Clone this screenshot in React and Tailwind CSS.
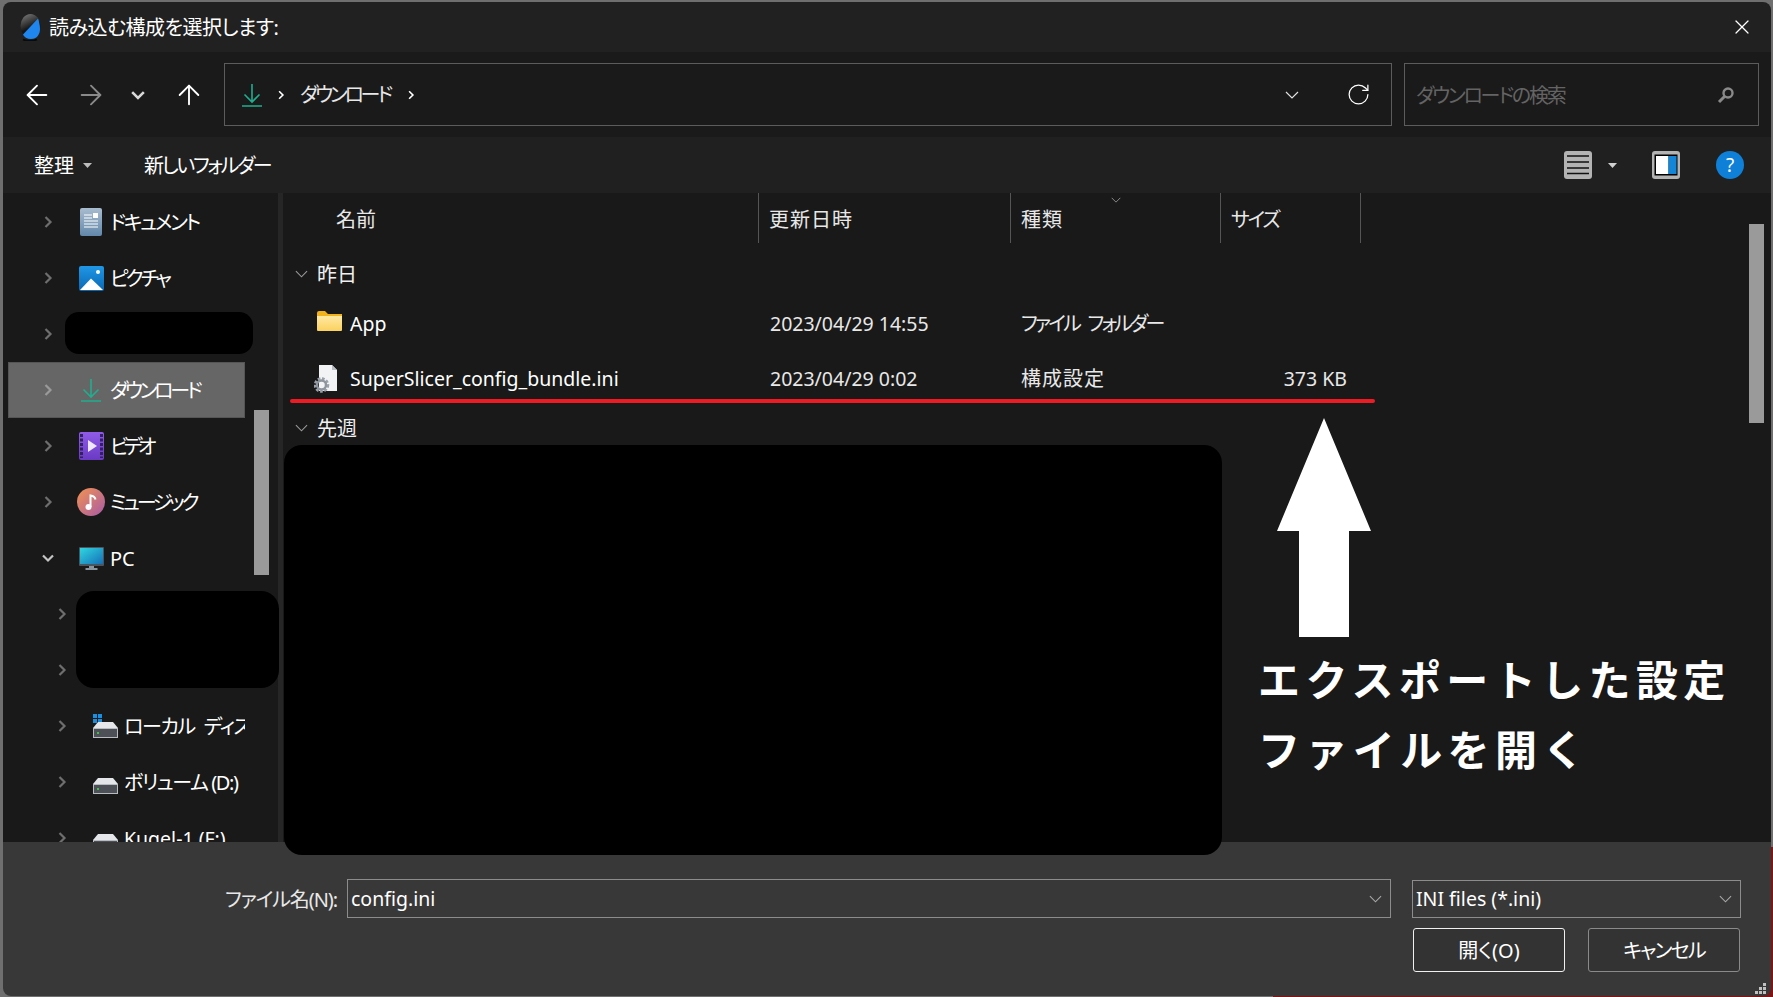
import { ArrowLeft, ArrowRight, ArrowUp, RotateCw, X } from 'lucide-react'

const Chev = ({ open, className = '' }) => (
  <svg width="12" height="12" viewBox="0 0 12 12" className={className}>
    <polyline points={open ? '1,3.5 6,8.5 11,3.5' : '3.5,1 8.5,6 3.5,11'} fill="none" stroke="currentColor" strokeWidth="2.2" />
  </svg>
)

const ThinChev = ({ className = '', w = 14 }) => (
  <svg width={w} height="8" viewBox="0 0 14 8" className={className}>
    <polyline points="1,1 7,7 13,1" fill="none" stroke="currentColor" strokeWidth="1.2" />
  </svg>
)

const Caret = ({ className = '' }) => (
  <svg width="9" height="5" viewBox="0 0 9 5" className={className}>
    <polygon points="0,0 9,0 4.5,5" fill="currentColor" />
  </svg>
)

const DownloadIcon = ({ size = 20 }) => (
  <svg width={size} height={size * 1.2} viewBox="0 0 20 24" fill="none" stroke="#1fae8f" strokeWidth="1.6">
    <path d="M10 1v18M2.500 11.500 10 19l7.500-7.500M0 23h20" />
  </svg>
)

const DocIcon = () => (
  <svg width="22" height="28" viewBox="0 0 22 28">
    <defs>
      <linearGradient id="doc" x1="0" y1="0" x2="0" y2="1">
        <stop offset="0" stopColor="#a9bccf" />
        <stop offset="1" stopColor="#6288ab" />
      </linearGradient>
    </defs>
    <rect width="22" height="28" rx="2" fill="url(#doc)" />
    <path d="M4 7h8M4 10h8M4 13h14M4 16h14M4 19h14" stroke="#fff" strokeWidth="1.2" />
    <rect x="13" y="5" width="5" height="5" fill="#fff" />
  </svg>
)

const PictureIcon = () => (
  <svg width="25" height="25" viewBox="0 0 25 25">
    <defs>
      <linearGradient id="pic" x1="0" y1="0" x2="0" y2="1">
        <stop offset="0" stopColor="#1f97e6" />
        <stop offset="1" stopColor="#0a68b4" />
      </linearGradient>
    </defs>
    <rect width="25" height="25" rx="2" fill="url(#pic)" />
    <circle cx="19" cy="6" r="2" fill="#fff" />
    <path d="M1 24 12 12.500 24 24Z" fill="#fff" />
  </svg>
)

const VideoIcon = () => (
  <svg width="25" height="28" viewBox="0 0 25 28">
    <defs>
      <linearGradient id="vid" x1="0" y1="0" x2="0" y2="1">
        <stop offset="0" stopColor="#8f5be8" />
        <stop offset="1" stopColor="#6a3ac4" />
      </linearGradient>
    </defs>
    <rect width="25" height="28" rx="2" fill="url(#vid)" />
    <path d="M2.500 2v24M22.500 2v24" stroke="#33205f" strokeWidth="3" strokeDasharray="3 1.500" />
    <polygon points="9,8 18,14 9,20" fill="#eee6fb" />
  </svg>
)

const MusicIcon = () => (
  <svg width="28" height="28" viewBox="0 0 28 28">
    <defs>
      <linearGradient id="mus" x1="0" y1="0" x2="1" y2="1">
        <stop offset="0" stopColor="#f2934f" />
        <stop offset="1" stopColor="#a85aa8" />
      </linearGradient>
    </defs>
    <circle cx="14" cy="14" r="14" fill="url(#mus)" />
    <circle cx="11.500" cy="19" r="3" fill="#fff" />
    <path d="M13.500 19V7.500c2 .3 4.500 1.500 5 4" fill="none" stroke="#fff" strokeWidth="2" />
  </svg>
)

const PcIcon = () => (
  <svg width="25" height="23" viewBox="0 0 25 23">
    <defs>
      <linearGradient id="pc" x1="0" y1="0" x2="1" y2="1">
        <stop offset="0" stopColor="#2fd6e0" />
        <stop offset="1" stopColor="#1570b8" />
      </linearGradient>
    </defs>
    <rect width="25" height="19" rx="1" fill="#4a5560" />
    <rect x="1" y="1" width="23" height="16" fill="url(#pc)" />
    <rect x="10" y="19" width="5" height="2" fill="#8b949c" />
    <rect x="6.500" y="21" width="12" height="2" fill="#8b949c" />
  </svg>
)

const DriveIcon = ({ win }) => (
  <svg width="25" height="24" viewBox="0 0 25 24">
    {win && <path d="M0 0h4v4H0zM5 0h4v4H5zM0 5h4v4H0zM5 5h4v4H5z" fill="#1a8fe0" />}
    <path d="M5 8h15l5 6H0Z" fill="#e4e6ea" />
    <rect x=".5" y="14.500" width="24" height="9" fill="#4d5157" stroke="#b8bcc0" />
    <rect x="4" y="18" width="2" height="2" fill="#3fc04a" />
  </svg>
)

const FolderIcon = () => (
  <svg width="25" height="20" viewBox="0 0 25 20">
    <defs>
      <linearGradient id="fold" x1="0" y1="0" x2="0" y2="1">
        <stop offset="0" stopColor="#ffe9a3" />
        <stop offset="1" stopColor="#fbd15e" />
      </linearGradient>
    </defs>
    <path d="M0 2a2 2 0 0 1 2-2h6l3 3h14v3H0Z" fill="#f2b21c" />
    <path d="M0 5h25v14a1 1 0 0 1-1 1H1a1 1 0 0 1-1-1Z" fill="url(#fold)" />
  </svg>
)

const IniIcon = () => (
  <svg width="24" height="28" viewBox="0 0 24 28">
    <path d="M5 0h13l5 5v21H5Z" fill="#f1f3f5" />
    <path d="M18 0v5h5Z" fill="#b9bec4" />
    <circle cx="7.500" cy="20" r="6" fill="none" stroke="#9aa1a8" strokeWidth="3.500" strokeDasharray="2.500 1.500" />
    <circle cx="7.500" cy="20" r="4.500" fill="none" stroke="#8e959c" strokeWidth="2.500" />
  </svg>
)

const Logo = () => (
  <svg width="21" height="27" viewBox="0 0 21 27">
    <defs>
      <linearGradient id="logo" x1="0.2" y1="0" x2="0.6" y2="1">
        <stop offset="0" stopColor="#777" />
        <stop offset="0.6" stopColor="#151515" />
      </linearGradient>
    </defs>
    <ellipse cx="10.500" cy="12" rx="10" ry="12" fill="url(#logo)" />
    <path d="M18 4.500 3 20.500c1 2.500 4 4.500 8 4.500 6 0 9-5 9-10 0-4-1-7.500-2-10.500Z" fill="#1f86f0" />
    <path d="M3 25.500c3 1.500 11 1.500 14 0" stroke="#0a0a0a" strokeWidth="1.500" fill="none" />
  </svg>
)

const SearchIcon = () => (
  <svg width="18" height="18" viewBox="0 0 18 18" fill="none" stroke="#8a8a8a">
    <circle cx="11" cy="7" r="4.500" strokeWidth="2.400" />
    <path d="M7.500 10.500 2 16" strokeWidth="3" />
  </svg>
)

const ViewIcon = () => (
  <svg width="28" height="28" viewBox="0 0 28 28">
    <rect width="28" height="28" rx="3" fill="#b3b3b3" />
    <path d="M3 5h22M3 11h22M3 17h22M3 22.500h22" stroke="#111" strokeWidth="1.400" />
  </svg>
)

const PaneIcon = () => (
  <svg width="28" height="28" viewBox="0 0 28 28">
    <rect width="28" height="28" rx="3" fill="#b3b3b3" />
    <rect x="2.500" y="3.500" width="23" height="21" fill="#000" />
    <rect x="4" y="5" width="12.500" height="18" fill="#fff" />
    <rect x="16.500" y="5" width="8" height="18" fill="#1486d8" />
  </svg>
)

const HelpIcon = () => (
  <div className="flex h-[28px] w-[28px] items-center justify-center rounded-full bg-[#0f80d8] text-[19px] leading-none text-white">?</div>
)

const sidebarRows = [
  { label: 'ドキュメント', icon: <DocIcon />, track: 'tracking-[-2.2px]' },
  { label: 'ピクチャ', icon: <PictureIcon />, track: 'tracking-[-3px]' },
  { label: '', icon: null },
  { label: 'ダウンロード', icon: <DownloadIcon />, active: true, track: 'tracking-[-3.3px]' },
  { label: 'ビデオ', icon: <VideoIcon />, track: 'tracking-[-4.5px]' },
  { label: 'ミュージック', icon: <MusicIcon />, track: 'tracking-[-3.3px]' },
  { label: 'PC', icon: <PcIcon />, open: true },
  { label: '', icon: null, nested: true },
  { label: '', icon: null, nested: true },
  { label: 'ローカル ディスク (C:)', icon: <DriveIcon win />, nested: true, track: 'tracking-[-1.4px] [word-spacing:5px]' },
  { label: 'ボリューム (D:)', icon: <DriveIcon />, nested: true, track: 'tracking-[-1.4px]' },
  { label: 'Kugel-1 (F:)', icon: <DriveIcon />, nested: true, track: 'text-[19.5px]' },
]

function SidebarRow({ row }) {
  const box = row.active
    ? 'ml-[5px] w-[237px] bg-[#666666] pl-[34px] outline outline-[#555555] -outline-offset-1'
    : row.nested
      ? 'w-[242px] pl-[53px]'
      : 'w-[242px] pl-[39px]'
  return (
    <div className={`flex h-[56px] shrink-0 items-center overflow-hidden whitespace-nowrap ${box}`}>
      <Chev open={row.open} className={`shrink-0 ${row.open ? 'text-[#c4c4c4]' : row.active ? 'text-[#9a9a9a]' : 'text-[#6e6e6e]'}`} />
      <div className="ml-[23px] flex h-[28px] w-[28px] shrink-0 items-center justify-center">{row.icon}</div>
      <span className={`ml-[5px] pt-[2px] text-white ${row.track || ''}`}>{row.label}</span>
    </div>
  )
}

const columns = 'grid grid-cols-[476px_252px_210px_140px]'

function Group({ label, h }) {
  return (
    <div className={`flex items-center pl-[12px] ${h}`}>
      <ThinChev w={13} className="text-[#9a9a9a]" />
      <span className="ml-[9px] pt-[2px] text-[#f0f0f0]">{label}</span>
    </div>
  )
}

function FileRow({ icon, name, date, type, typeClass = '', size, h }) {
  return (
    <div className={`${columns} items-center pt-[2px] ${h}`}>
      <div className="flex items-center">
        <div className="ml-[31px] flex w-[36px] justify-start">{icon}</div>
        <span className="text-[19.5px] text-white">{name}</span>
      </div>
      <span className="pl-[11px] text-[19.5px] text-[#e8e8e8]">{date}</span>
      <span className={`pl-[10px] text-[#e8e8e8] ${typeClass}`}>{type}</span>
      <span className="pr-[14px] text-right text-[19.5px] text-[#e8e8e8]">{size}</span>
    </div>
  )
}

export default function App() {
  return (
    <div className="relative h-[997px] w-[1773px] overflow-hidden bg-[#6f6f6f] pl-[3px] pr-[2px] pt-[2px] font-['Noto_Sans','Noto_Sans_CJK_JP',sans-serif] text-[20px] leading-none text-white [font-feature-settings:'palt']">
      {/* desktop showing behind the dialog's lower right corner */}
      <div className="absolute bottom-0 right-0 h-[150px] w-[500px] bg-[#7a1616]" />

      <div className="relative flex h-[994px] flex-col overflow-hidden rounded-[8px]">
        {/* title bar */}
        <div className="flex h-[50px] shrink-0 items-center bg-[#212121] pl-[17px] pr-[17px]">
          <Logo />
          <span className="ml-[8px] flex-1 pt-[2px] tracking-[-0.5px]">読み込む構成を選択します:</span>
          <X size={24} strokeWidth={1.2} />
        </div>

        {/* address bar */}
        <div className="flex h-[85px] shrink-0 items-center bg-[#1a1a1a] pl-[18px] pr-[12px]">
          <ArrowLeft size={32} strokeWidth={1.4} />
          <ArrowRight size={32} strokeWidth={1.4} className="ml-[22px] text-[#8a8a8a]" />
          <Chev open className="ml-[24px] h-[14px] w-[14px] text-[#d8d8d8]" />
          <ArrowUp size={32} strokeWidth={1.4} className="ml-[28px]" />
          <div className="ml-[19px] flex h-[63px] w-[1168px] items-center border border-[#5c5c5c] pl-[17px] pr-[20px]">
            <DownloadIcon />
            <Chev className="ml-[13px] scale-75" />
            <span className="ml-[13px] pt-[1px] tracking-[-3.2px] text-[#e8e8e8]">ダウンロード</span>
            <Chev className="ml-[15px] scale-75" />
            <div className="flex-1" />
            <ThinChev w={16} className="text-[#e0e0e0]" />
            <RotateCw size={25} strokeWidth={1.2} className="ml-[46px]" />
          </div>
          <div className="ml-[12px] flex h-[63px] flex-1 items-center justify-between border border-[#5c5c5c] pl-[11px] pr-[23px]">
            <span className="pt-[2px] tracking-[-2.2px] text-[#646464]">ダウンロードの検索</span>
            <SearchIcon />
          </div>
        </div>

        {/* toolbar */}
        <div className="flex h-[56px] shrink-0 items-center bg-[#202020] pl-[31px] pr-[27px]">
          <span className="pt-[2px]">整理</span>
          <Caret className="ml-[9px] text-[#bdbdbd]" />
          <span className="ml-[52px] pt-[2px] tracking-[-2.3px]">新しいフォルダー</span>
          <div className="flex-1" />
          <ViewIcon />
          <Caret className="ml-[16px] text-[#d0d0d0]" />
          <div className="ml-[35px]"><PaneIcon /></div>
          <div className="ml-[36px]"><HelpIcon /></div>
        </div>

        {/* main */}
        <div className="flex min-h-0 flex-1 bg-[#191919]">
          <div className="flex w-[275px] shrink-0 overflow-hidden">
            <div className="flex w-[251px] shrink-0 flex-col pt-[1px]">
              {sidebarRows.map((row, i) => <SidebarRow key={i} row={row} />)}
            </div>
            <div className="w-[15px] shrink-0 pt-[217px]">
              <div className="h-[165px] bg-[#9a9a9a]" />
            </div>
          </div>
          <div className="w-[5px] shrink-0 bg-[#262626]" />
          <div className="flex flex-1">
            <div className="flex-1">
              <div className={`${columns} h-[50px] text-[#e8e8e8]`}>
                <div className="flex items-center border-r border-[#555555] pl-[53px] pt-[4px]">名前</div>
                <div className="flex items-center border-r border-[#555555] pl-[10px] pt-[4px] tracking-[1px]">更新日時</div>
                <div className="relative flex items-center border-r border-[#555555] pl-[10px] pt-[4px] tracking-[1px]">
                  種類
                  <ThinChev w={10} className="absolute left-[100px] top-[3px] text-[#9a9a9a]" />
                </div>
                <div className="flex items-center border-r border-[#555555] pl-[10px] pt-[4px] tracking-[-2.3px]">サイズ</div>
              </div>
              <div className="h-[8px]" />
              <Group label="昨日" h="h-[46px]" />
              <FileRow icon={<div className="mb-[6px] ml-[3px]"><FolderIcon /></div>} name="App" date="2023/04/29 14:55" type="ファイル フォルダー" typeClass="tracking-[-2.8px] [word-spacing:6px]" h="h-[52px]" />
              <FileRow icon={<IniIcon />} name="SuperSlicer_config_bundle.ini" date="2023/04/29 0:02" type="構成設定" typeClass="tracking-[1px]" size="373 KB" h="h-[58px]" />
              <Group label="先週" h="h-[42px]" />
            </div>
            <div className="mr-[7px] w-[15px] pt-[31px]">
              <div className="h-[199px] bg-[#9a9a9a]" />
            </div>
          </div>
        </div>

        {/* footer */}
        <div className="h-[154px] shrink-0 bg-[#383838] pt-[37px]">
          <div className="flex items-center">
            <span className="ml-[222px] w-[122px] pt-[2px] tracking-[-1.1px] text-[#e8e8e8]">ファイル名(N):</span>
            <div className="flex h-[39px] w-[1044px] items-center justify-between border border-[#8c8c8c] pl-[3px] pr-[8px]">
              <span className="text-[19.5px]">config.ini</span>
              <ThinChev w={13} className="text-[#a8a8a8]" />
            </div>
            <div className="ml-[21px] flex h-[38px] w-[329px] items-center justify-between border border-[#8c8c8c] pl-[3px] pr-[8px]">
              <span className="text-[19.5px]">INI files (*.ini)</span>
              <ThinChev w={13} className="text-[#a8a8a8]" />
            </div>
          </div>
          <div className="mt-[10px] flex justify-end gap-[23px] pr-[31px]">
            <div className="flex h-[44px] w-[152px] items-center justify-center rounded-[3px] border border-[#f0f0f0] bg-[#333333] pt-[2px]">開く(O)</div>
            <div className="flex h-[44px] w-[152px] items-center justify-center rounded-[3px] border border-[#8a8a8a] bg-[#333333] pt-[2px] tracking-[-1.8px]">キャンセル</div>
          </div>
        </div>
      </div>

      {/* redactions pasted over the screenshot */}
      <div className="absolute left-[65px] top-[312px] h-[42px] w-[188px] rounded-[14px] bg-black" />
      <div className="absolute left-[76px] top-[591px] h-[97px] w-[203px] rounded-[18px] bg-black" />
      <div className="absolute left-[284px] top-[445px] h-[410px] w-[938px] rounded-[18px] bg-black" />

      {/* annotation */}
      <div className="absolute left-[290px] top-[399px] h-[4px] w-[1085px] rounded-full bg-[#ed1c24]" />
      <svg className="absolute left-[1277px] top-[418px]" width="94" height="219" viewBox="0 0 94 219">
        <polygon points="47,0 94,113 72,113 72,219 22,219 22,113 0,113" fill="#fff" />
      </svg>
      <div className="absolute left-[1258px] top-[645px] whitespace-nowrap text-[42px] font-bold leading-[70px] tracking-[5.4px] [font-feature-settings:normal]">
        エクスポートした設定<br />ファイルを開く
      </div>

      {/* resize grip */}
      <svg className="absolute left-[1755px] top-[983px]" width="11" height="11" viewBox="0 0 11 11" fill="#c0c0c0">
        <path d="M8 0h3v3H8zM4 4h3v3H4zM8 4h3v3H8zM0 8h3v3H0zM4 8h3v3H4zM8 8h3v3H8z" />
      </svg>
    </div>
  )
}
